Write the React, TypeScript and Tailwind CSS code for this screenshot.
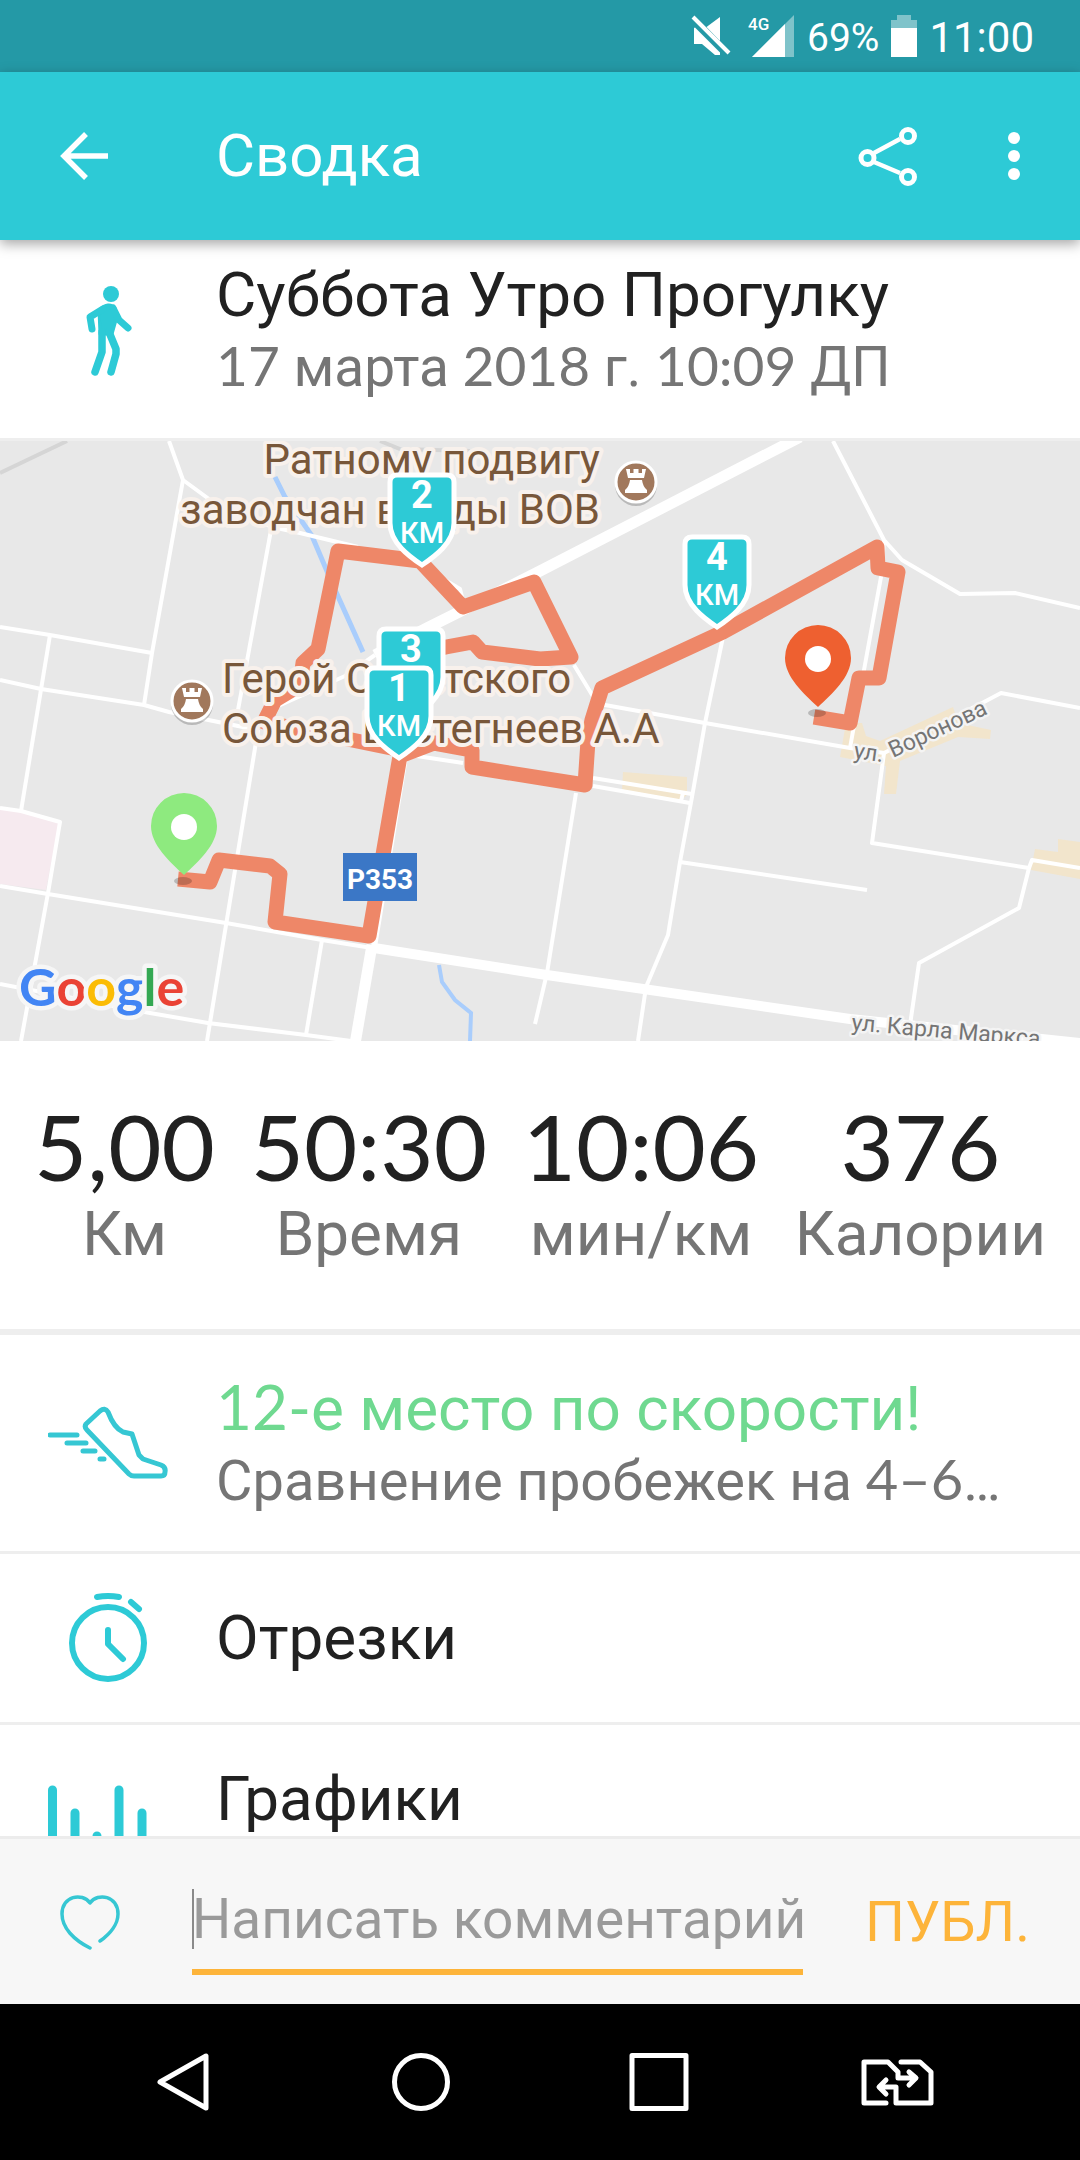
import React from "react";

const ROBOTO = "font-[Roboto,'Noto_Sans',sans-serif]";

function Num({ children }: { children: React.ReactNode }) {
  return <span className="font-[Lato,sans-serif] font-normal">{children}</span>;
}

function StatusBar() {
  return (
    <div className="flex h-[72px] shrink-0 items-center justify-end bg-[#2499a6] pr-[46px] text-white">
      <svg width="40" height="42" viewBox="0 0 40 42" aria-label="Без звука">
        <path d="M3 13 L3 29 L11 29 L24 40 L29 40 L29 37.500 L4 12.500 Z" fill="#fff" />
        <path d="M15.500 12 L29 2 L29 26 Z" fill="#fff" />
        <path d="M2 2 L38 38" stroke="#fff" strokeWidth="4" />
      </svg>
      <svg className="ml-4" width="48" height="42" viewBox="0 0 48 42" aria-label="Сигнал 4G">
        <path d="M47 0 V42 H5 Z" fill="#7fc3ca" />
        <path d="M38 9 V42 H5 Z" fill="#fff" />
        <text x="1" y="15" fontSize="17" fontWeight="500" fill="#fff" className={ROBOTO}>4G</text>
      </svg>
      <span className="ml-3 pt-1 text-[39px] leading-none">69%</span>
      <svg className="ml-3" width="26" height="42" viewBox="0 0 26 42" aria-label="Батарея">
        <path d="M6 0 H20 V5 H26 V13 H0 V5 H6 Z" fill="#7fc3ca" />
        <path d="M0 13 H26 V42 H0 Z" fill="#fff" />
      </svg>
      <span className="ml-3 pt-1 text-[42px] leading-none">11:00</span>
    </div>
  );
}

function AppBar() {
  return (
    <header className="relative z-10 flex h-[168px] shrink-0 items-center bg-[#2dcad6] text-white shadow-[0_4px_12px_rgba(0,0,0,0.35)]">
      <div className="w-[216px] shrink-0 pl-[60px]">
        <button type="button" aria-label="Назад" className="block">
          <svg width="48" height="48" viewBox="0 0 48 48" fill="none" stroke="#fff" strokeWidth="5.500">
            <path d="M26 2 L4 24 L26 46 M4 24 H48" />
          </svg>
        </button>
      </div>
      <h1 className="flex-1 text-[60px] leading-none">Сводка</h1>
      <button type="button" aria-label="Поделиться" className="mr-[90px] block">
        <svg width="60" height="60" viewBox="0 0 60 60" fill="none" stroke="#fff">
          <path d="M16 27 L42 13 M16 36 L42 47" strokeWidth="4.500" />
          <g strokeWidth="5">
            <circle cx="9.500" cy="32" r="6.500" />
            <circle cx="50" cy="10" r="6.500" />
            <circle cx="50" cy="51" r="6.500" />
          </g>
        </svg>
      </button>
      <button type="button" aria-label="Ещё" className="mr-[60px] block">
        <svg width="12" height="48" viewBox="0 0 12 48" fill="#fff">
          <circle cx="6" cy="6" r="6" />
          <circle cx="6" cy="24" r="6" />
          <circle cx="6" cy="42" r="6" />
        </svg>
      </button>
    </header>
  );
}

function Shield({ x, y, n }: { x: number; y: number; n: number }) {
  return (
    <g transform={`translate(${x} ${y})`}>
      <path
        d="M-25 -90 H25 Q32 -90 32 -83 V-42 C32 -22 12 -8 0 0 C-12 -8 -32 -22 -32 -42 V-83 Q-32 -90 -25 -90 Z"
        fill="#2dcad6"
        stroke="#fff"
        strokeWidth="5"
      />
      <text y="-57" textAnchor="middle" fontSize="38" fontWeight="700" fill="#fff">{n}</text>
      <text y="-22" textAnchor="middle" fontSize="29" fontWeight="500" fill="#fff">КМ</text>
    </g>
  );
}

function Pin({ x, y, color }: { x: number; y: number; color: string }) {
  return (
    <g transform={`translate(${x} ${y})`}>
      <ellipse cx="-1" cy="6" rx="9" ry="4" fill="#000" opacity="0.2" />
      <path d="M0 0 C-14 -13 -33 -30 -33 -49 A33 33 0 0 1 33 -49 C33 -30 14 -13 0 0 Z" fill={color} />
      <circle cy="-48" r="13" fill="#fff" />
    </g>
  );
}

function Castle({ x, y }: { x: number; y: number }) {
  return (
    <g transform={`translate(${x} ${y})`}>
      <circle cy="3" r="21" fill="#000" opacity="0.2" />
      <circle r="20" fill="#a1785c" stroke="#fff" strokeWidth="3" />
      <path
        d="M-10 -13 H-6 V-9 H-2.500 V-13 H2.500 V-9 H6 V-13 H10 L8 -4 H-8 Z M-6 -2 H6 Q7 5 11 8 V11 H-11 V8 Q-7 5 -6 -2 Z"
        fill="#fff"
      />
    </g>
  );
}

function RouteMap() {
  return (
    <svg
      className={`block aspect-[9/5] w-full bg-[#e8e8e8] ${ROBOTO}`}
      viewBox="0 0 1080 600"
      preserveAspectRatio="xMidYMid slice"
      role="img"
      aria-label="Карта маршрута"
    >
      <g fill="#f2e5cc">
        <path d="M846 282 H862 L866 295 L880 300 L953 266 L958 282 L991 289 L990 298 L958 296 L900 320 L896 353 H884 L886 325 L840 316 Z" />
        <path d="M1035 408 L1058 411 V398 L1080 401 V438 L1031 429 Z" />
        <path d="M623 331 L687 336 V354 L681 359 L622 349 Z" />
      </g>
      <path d="M0 368 L21 371 L59 382 L46 449 L0 443 Z" fill="#f6eaef" />
      <path d="M0 32 L67 0 M380 0 L400 8 L470 10" fill="none" stroke="#d5d5d5" strokeWidth="4" />
      <g fill="none" stroke="#a9cdfc" strokeWidth="5">
        <path d="M275 36 L285 56 L312 95 L332 142 L363 211" />
        <path d="M439 524 L442 541 L455 559 L471 572 L470 600" strokeWidth="4" />
      </g>
      <g fill="none" stroke="#fff" strokeWidth="4" strokeLinejoin="round">
        <path d="M169 0 L183 39 L213 61 L272 86 L300 92 L358 106" />
        <path d="M183 39 L152 212 L144 264" />
        <path d="M0 186 L50 194 L152 212" />
        <path d="M50 194 L21 370" />
        <path d="M0 239 L41 248 L144 264 L169 271 L258 289" />
        <path d="M271 89 L238 269" />
        <path d="M258 289 L207 600" />
        <path d="M276 266 L345 235 L375 214" />
        <path d="M430 130 L460 148 L464 164" />
        <path d="M833 0 L884 99 L902 119 L960 153 L1015 152 L1080 167" />
        <path d="M884 99 L881 136 L864 229 L850 307" />
        <path d="M723 196 L705 282 L692 356 L680 421 L668 494 L646 546 L638 600" />
        <path d="M574 224 L597 262 L605 264 L705 282 L850 307 L884 312 L984 261 L1001 252 L1080 267" />
        <path d="M884 312 L872 402 L1029 427 L1019 467 L919 522 L910 584" />
        <path d="M1029 427 L1032 419 L1080 427" />
        <path d="M593 337 L692 353 M593 345 L690 362 M683 352 L681 360" />
        <path d="M680 421 L867 449" />
        <path d="M576 352 L547 532 L535 583" />
        <path d="M0 445 L48 453 L226 482 L322 499 L372 507" />
        <path d="M0 367 L21 370 L60 381 L48 452 L21 600" />
        <path d="M0 543 L150 572 L208 582 L306 594 L351 600" />
        <path d="M322 499 L306 594" />
        <path d="M410 314 L463 322" />
        <path d="M405 316 L374 506" strokeWidth="6" />
        <path d="M372 504 L355 603" strokeWidth="11" />
        <path d="M374 507 L540 533 L850 578 L1080 602" strokeWidth="10" />
        <path d="M375 214 L427 187 L461 170 L540 130 L800 -4" strokeWidth="11" />
      </g>
      <g fill="none" stroke="#ee8768" strokeWidth="15" strokeLinejoin="round">
        <path d="M178 438 L210 441 L219 419 L270 425 L280 433 L275 481 L369 495 L400 315 L434 302 L472 309 L472 326 L585 344 L588 300 L592 279 L602 247 L723 191 L877 106 L878 127 L898 131 L879 237 L859 237 L850 282 L814 276" />
        <path d="M396 308 L264 281 L275 259 L300 244 L303 222 L318 208 L338 110 L420 120 L463 166 L534 141 L571 216 L540 218 L482 211 L473 201 L446 206 L405 215" />
      </g>
      <g fontSize="42" fill="#78573a" stroke="#f8f1ec" strokeWidth="8" strokeLinejoin="round" paintOrder="stroke">
        <text x="600" y="33" textAnchor="end">Ратному подвигу</text>
        <text x="600" y="83" textAnchor="end">заводчан в годы ВОВ</text>
        <text x="222" y="252">Герой Советского</text>
        <text x="222" y="302">Союза Евстегнеев А.А</text>
      </g>
      <g fontSize="23" fill="#757575" stroke="#f4f4f4" strokeWidth="5" strokeLinejoin="round" paintOrder="stroke">
        <text transform="translate(853 317) rotate(8)">ул.</text>
        <text transform="translate(893 317) rotate(-25)">Воронова</text>
        <text transform="translate(851 589) rotate(5)">ул. Карла Маркса</text>
      </g>
      <Castle x={636} y={41} />
      <Castle x={192} y={260} />
      <rect x="343" y="412" width="74" height="48" fill="#3b77c6" />
      <text x="380" y="448" textAnchor="middle" fontSize="28" fontWeight="700" fill="#fff">Р353</text>
      <Pin x={184} y={434} color="#8eea7f" />
      <Pin x={818} y={266} color="#ee6030" />
      <Shield x={422} y={124} n={2} />
      <Shield x={411} y={278} n={3} />
      <Shield x={399} y={317} n={1} />
      <Shield x={717} y={186} n={4} />
      <text
        x="19"
        y="565"
        fontSize="52"
        fontWeight="700"
        stroke="#f6f6f6"
        strokeWidth="9"
        strokeLinejoin="round"
        paintOrder="stroke"
        className="font-[Lato,sans-serif]"
      >
        <tspan fill="#4285f4">G</tspan>
        <tspan fill="#ea4335">o</tspan>
        <tspan fill="#fbbc05">o</tspan>
        <tspan fill="#4285f4">g</tspan>
        <tspan fill="#34a853">l</tspan>
        <tspan fill="#ea4335">e</tspan>
      </text>
    </svg>
  );
}

const stats = [
  { value: "5,00", label: "Км" },
  { value: "50:30", label: "Время" },
  { value: "10:06", label: "мин/км" },
  { value: "376", label: "Калории" },
];

function Row({ icon, children }: { icon: React.ReactNode; children: React.ReactNode }) {
  return (
    <a href="#" className="flex items-center">
      <span className="flex w-[216px] shrink-0 justify-center">{icon}</span>
      <span className="min-w-0 flex-1 pr-[60px]">{children}</span>
    </a>
  );
}

function WalkIcon() {
  return (
    <svg width="48" height="90" viewBox="0 0 48 90" fill="none" stroke="#2dcad6" strokeLinecap="round" strokeLinejoin="round">
      <circle cx="27" cy="8" r="8" fill="#2dcad6" stroke="none" />
      <path d="M15 24 Q25 15 31 22 L32 34 L28 48 L16 48 Z" fill="#2dcad6" strokeWidth="3" />
      <path d="M19 23 L6 31 L8 43" strokeWidth="7" />
      <path d="M29 22 L35 34 L44 42" strokeWidth="7" />
      <path d="M18 46 V66 L11 86" strokeWidth="7.500" />
      <path d="M25 46 L32 63 V68 L27 86" strokeWidth="7.500" />
    </svg>
  );
}

function ShoeIcon() {
  return (
    <svg width="120" height="74" viewBox="0 0 120 74" fill="none" stroke="#36c7d3" strokeWidth="5" strokeLinecap="round" strokeLinejoin="round">
      <path d="M52 5 L38 18 Q36 21 39 24 L81 68 Q83 70 86 70 H113 Q117 70 117 66 Q118 61 113 59 L95 53 L91 49 L84 28 L75 26 Q66 22 60 6 Q57 1 52 5 Z" />
      <path d="M2 29 H29 M19 37 H38 M35 45 H47 M52 53 H56" />
    </svg>
  );
}

function StopwatchIcon() {
  return (
    <svg width="78" height="90" viewBox="0 0 78 90" fill="none" stroke="#2dcad6" strokeWidth="6" strokeLinecap="round" strokeLinejoin="round">
      <circle cx="39" cy="50" r="36" />
      <path d="M28 4 Q39 2 50 4 M62 9 L70 16 M39 37 V51 L54 66" />
    </svg>
  );
}

function BarsIcon() {
  return (
    <svg width="120" height="148" viewBox="0 0 120 148" fill="none" stroke="#2dcad6" strokeWidth="9" strokeLinecap="round">
      <path d="M4.500 65 V140 M27 88 V140 M49 111 V140 M71 65 V140 M94 88 V140" />
    </svg>
  );
}

function NavBar() {
  return (
    <nav className="flex h-[156px] shrink-0 items-center justify-between bg-black px-[144px]">
      <button type="button" aria-label="Назад">
        <svg width="78" height="60" viewBox="0 0 78 60" fill="none" stroke="#fff" strokeWidth="5" strokeLinejoin="round">
          <path d="M62 4 V56 L16 30 Z" />
        </svg>
      </button>
      <button type="button" aria-label="Домой">
        <svg width="78" height="60" viewBox="0 0 78 60" fill="none" stroke="#fff" strokeWidth="5">
          <circle cx="39" cy="30" r="26.500" />
        </svg>
      </button>
      <button type="button" aria-label="Обзор">
        <svg width="78" height="60" viewBox="0 0 78 60" fill="none" stroke="#fff" strokeWidth="5" strokeLinejoin="round">
          <rect x="12" y="3.500" width="54" height="53" />
        </svg>
      </button>
      <button type="button" aria-label="Сменить SIM">
        <svg width="78" height="60" viewBox="0 0 78 60" fill="none" stroke="#fff" strokeWidth="5" strokeLinecap="round" strokeLinejoin="round">
          <path d="M28 51 H6 V10 H30 L40 20 V26 H57 M51 20 L58 26 L51 33" />
          <path d="M43 10 H62 L73 20 V51 H38 V35 H22 M28 28 L21 35 L28 42" />
        </svg>
      </button>
    </nav>
  );
}

export default function App() {
  return (
    <div className={`flex h-screen flex-col overflow-hidden bg-white text-[#212121] ${ROBOTO}`}>
      <StatusBar />
      <AppBar />
      <main className="flex min-h-0 flex-1 flex-col overflow-hidden">
        <section className="flex h-[198px] shrink-0 items-center">
          <div className="flex w-[216px] shrink-0 justify-center pb-4">
            <WalkIcon />
          </div>
          <div className="pb-4">
            <h2 className="text-[62px] leading-[70px]">Суббота Утро Прогулку</h2>
            <p className="text-[55px] leading-[70px] text-[#757575]">
              <Num>17</Num> марта <Num>2018</Num> г. <Num>10:09</Num> ДП
            </p>
          </div>
        </section>
        <div className="shrink-0 border-t-[3px] border-[#eee]">
          <RouteMap />
        </div>
        <dl className="flex h-[288px] shrink-0 justify-between px-[34px] pt-[60px]">
          {stats.map((s) => (
            <div key={s.label} className="flex flex-col-reverse items-center justify-end gap-1">
              <dt className="text-[62px] leading-[78px] text-[#757575]">{s.label}</dt>
              <dd className="font-[Lato,sans-serif] text-[92px] leading-[90px] font-normal">{s.value}</dd>
            </div>
          ))}
        </dl>
        <div className="shrink-0 border-t-[6px] border-[#eee]">
          <div className="flex h-[216px] flex-col justify-center">
            <Row icon={<ShoeIcon />}>
              <span className="block text-[62px] leading-[70px] text-[#6fd990]">
                <Num>12-</Num>е место по скорости!
              </span>
              <span className="block truncate text-[56px] leading-[70px] text-[#757575]">
                Сравнение пробежек на <Num>4–6</Num>…
              </span>
            </Row>
          </div>
          <div className="flex h-[171px] flex-col justify-center border-t-[3px] border-[#eee]">
            <Row icon={<StopwatchIcon />}>
              <span className="text-[62px] leading-[70px]">Отрезки</span>
            </Row>
          </div>
          <div className="flex flex-col border-t-[3px] border-[#eee] pb-6">
            <Row icon={<BarsIcon />}>
              <span className="text-[62px] leading-[70px]">Графики</span>
            </Row>
          </div>
        </div>
      </main>
      <form className="flex h-[168px] shrink-0 items-center border-t-[3px] border-[#ececec] bg-[#f7f7f7]" onSubmit={(e) => e.preventDefault()}>
        <button type="button" aria-label="Нравится" className="mr-[72px] ml-[60px] block shrink-0">
          <svg width="60" height="56" viewBox="0 0 60 56" fill="none" stroke="#36c7d3" strokeWidth="3.500" strokeLinecap="round" strokeLinejoin="round">
            <path d="M30 54 C14 46 2 34 2 20 C2 2 22 -2 30 9 C38 -2 58 2 58 20 C58 30 50 40 40 47" />
          </svg>
        </button>
        <div className="relative min-w-0 flex-1">
          <input
            type="text"
            aria-label="Написать комментарий"
            placeholder="Написать комментарий"
            className="block h-[106px] w-full border-b-[6px] border-[#fdb43a] bg-transparent text-[55px] outline-none placeholder:text-[#9a9a9a] placeholder:opacity-100"
          />
          <span className="absolute top-5 left-0 h-[60px] w-[2px] bg-[#8a8a8a]" />
        </div>
        <button type="submit" className="mr-[50px] ml-[62px] shrink-0 text-[56px] leading-none text-[#fdb43a]">
          ПУБЛ.
        </button>
      </form>
      <NavBar />
    </div>
  );
}
